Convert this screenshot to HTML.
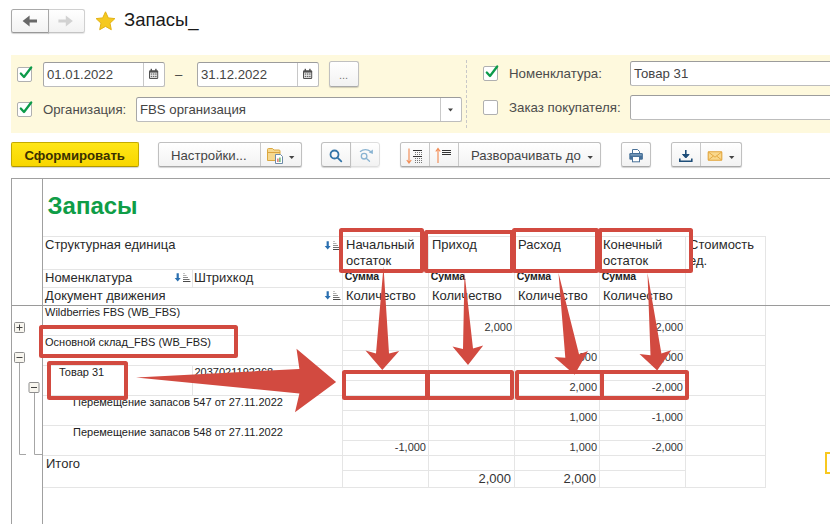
<!DOCTYPE html>
<html lang="ru">
<head>
<meta charset="utf-8">
<title>Запасы_</title>
<style>
html,body{margin:0;padding:0;background:#fff;}
body{width:830px;height:524px;position:relative;overflow:hidden;font-family:"Liberation Sans",Arial,sans-serif;font-size:13.2px;color:#444;}
.a{position:absolute;}
.t{position:absolute;white-space:nowrap;line-height:16px;}
.btn{position:absolute;box-sizing:border-box;border:1px solid #c0c0c0;border-bottom-color:#a9a9a9;border-radius:2.5px;background:linear-gradient(#ffffff,#f2f2f2);box-shadow:0 1px 1px rgba(0,0,0,.18);}
.inp{position:absolute;box-sizing:border-box;border:1px solid #bdbdbd;border-top-color:#9c9c9c;border-left-color:#a8a8a8;border-radius:2.5px;background:#fff;}
.cb{position:absolute;box-sizing:border-box;width:15px;height:15px;border:1px solid #b0b0b0;border-radius:2px;background:#fff;}
.hl{position:absolute;height:1px;background:#e5e5e5;}
.vl{position:absolute;width:1px;background:#e5e5e5;}
.h13{font-size:13px;color:#2a2a2a;}
.s11{font-size:11px;color:#222;}
.num{position:absolute;white-space:nowrap;text-align:right;font-size:11px;line-height:14px;color:#333;}
.red{position:absolute;box-sizing:border-box;border:4px solid #d24a40;border-radius:2.5px;}
</style>
</head>
<body>

<!-- nav buttons -->
<div class="btn" style="left:48px;top:9px;width:37px;height:24px;border-color:#d0d0d0;border-bottom-color:#c4c4c4;border-radius:0 2.5px 2.5px 0;box-shadow:0 1px 1px rgba(0,0,0,.10);"></div>
<div class="btn" style="left:11px;top:9px;width:38px;height:24px;border-color:#a8a8a8;border-bottom-color:#989898;border-radius:2.5px 0 0 2.5px;"></div>
<svg class="a" style="left:0;top:0" width="90" height="40" viewBox="0 0 90 40">
  <path d="M22.6 21 L29.6 15.6 L29.6 19.4 L37 19.4 L37 22.6 L29.6 22.6 L29.6 26.4 Z" fill="#686868"/>
  <path d="M72.8 21 L65.8 15.6 L65.8 19.4 L58.4 19.4 L58.4 22.6 L65.8 22.6 L65.8 26.4 Z" fill="#d2d2d2"/>
</svg>
<!-- star -->
<svg class="a" style="left:0;top:0" width="130" height="40" viewBox="0 0 130 40">
  <path d="M105.5 11.8 L108.3 17.9 L114.9 18.6 L110.0 23.2 L111.3 29.7 L105.5 26.4 L99.7 29.7 L101.0 23.2 L96.1 18.6 L102.7 17.9 Z" fill="#f5c91f" stroke="#e3b214" stroke-width="1" stroke-linejoin="round"/>
</svg>
<div class="t" style="left:124px;top:8px;font-size:18.5px;line-height:24px;color:#1a1a1a;">Запасы_</div>

<!-- yellow panel -->
<div class="a" style="left:11px;top:55px;width:819px;height:78px;background:#fef9dd;"></div>

<div class="cb" style="left:17px;top:67px;"></div>
<div class="inp" style="left:43px;top:62px;width:122px;height:25px;"></div>
<div class="vl" style="left:143px;top:63px;height:23px;background:#c8c8c8;"></div>
<div class="t" style="left:47px;top:66.5px;">01.01.2022</div>
<div class="t" style="left:175px;top:67px;">–</div>
<div class="inp" style="left:197px;top:62px;width:122px;height:25px;"></div>
<div class="vl" style="left:297px;top:63px;height:23px;background:#c8c8c8;"></div>
<div class="t" style="left:201px;top:66.5px;">31.12.2022</div>
<div class="btn" style="left:329px;top:61px;width:30px;height:26px;"></div>
<div class="t" style="left:339px;top:66.5px;color:#777;font-size:11px;">...</div>

<div class="cb" style="left:17px;top:102px;"></div>
<div class="t" style="left:43px;top:102px;color:#4c4c4c;">Организация:</div>
<div class="inp" style="left:136px;top:97px;width:326px;height:25px;"></div>
<div class="vl" style="left:440px;top:98px;height:23px;background:#c8c8c8;"></div>
<div class="t" style="left:140px;top:102px;">FBS организация</div>

<div class="a" style="left:466px;top:60px;width:0;height:68px;border-left:1px dashed #c8c8c8;"></div>

<div class="cb" style="left:483px;top:66px;"></div>
<div class="t" style="left:509px;top:65.5px;color:#4c4c4c;font-size:13.3px;">Номенклатура:</div>
<div class="inp" style="left:630px;top:61px;width:210px;height:25px;"></div>
<div class="t" style="left:634px;top:65.5px;">Товар 31</div>
<div class="cb" style="left:483px;top:100px;"></div>
<div class="t" style="left:509px;top:99.5px;color:#4c4c4c;font-size:13.3px;">Заказ покупателя:</div>
<div class="inp" style="left:630px;top:95px;width:210px;height:25px;"></div>

<!-- toolbar -->
<div class="btn" style="left:11px;top:142px;width:128px;height:25px;background:linear-gradient(#ffe617,#f8d600);border-color:#c4aa00;border-bottom-color:#b09800;border-radius:2px;"></div>
<div class="t" style="left:24.5px;top:147.5px;font-size:13.2px;font-weight:bold;color:#3a3000;">Сформировать</div>

<div class="btn" style="left:158px;top:142px;width:144px;height:25px;"></div>
<div class="vl" style="left:260px;top:143px;height:23px;background:#c8c8c8;"></div>
<div class="t" style="left:171px;top:147.5px;font-size:13.2px;">Настройки...</div>

<div class="btn" style="left:350px;top:142px;width:30px;height:25px;border-color:#dedede;border-radius:0 3px 3px 0;box-shadow:0 1px 1px rgba(0,0,0,.08);"></div>
<div class="btn" style="left:321px;top:142px;width:30px;height:25px;border-radius:3px 0 0 3px;"></div>

<div class="btn" style="left:400px;top:142px;width:201px;height:25px;"></div>
<div class="vl" style="left:429px;top:143px;height:23px;background:#c8c8c8;"></div>
<div class="vl" style="left:458px;top:143px;height:23px;background:#c8c8c8;"></div>
<div class="t" style="left:471px;top:147.5px;font-size:13.2px;">Разворачивать до</div>

<div class="btn" style="left:621px;top:142px;width:30px;height:25px;"></div>
<div class="btn" style="left:671px;top:142px;width:71px;height:25px;"></div>
<div class="vl" style="left:700px;top:143px;height:23px;background:#c8c8c8;"></div>


<!-- icons -->
<svg class="a" style="left:0;top:0" width="830" height="180" viewBox="0 0 830 180">
  <!-- checkmarks -->
  <g fill="none" stroke="#0d9b4a" stroke-width="2.3" stroke-linecap="round" stroke-linejoin="round">
    <path d="M20.8 73.5 L24 77 L31.2 67.5"/>
    <path d="M20.8 108.5 L24 112 L31.2 102.5"/>
    <path d="M486.8 72.5 L490 76 L497.2 66.5"/>
  </g>
  <!-- calendar icons -->
  <g transform="translate(0 0)">
    <rect x="149" y="70.3" width="9.2" height="8.6" rx="1.2" fill="#505050"/>
    <rect x="150.6" y="68.8" width="1.4" height="2.2" fill="#505050"/>
    <rect x="155.2" y="68.8" width="1.4" height="2.2" fill="#505050"/>
    <rect x="150" y="72.6" width="7.2" height="5.3" fill="#f0f0f0"/>
    <g fill="#6a6a6a">
      <rect x="150.7" y="73.4" width="1.5" height="1.3"/><rect x="152.9" y="73.4" width="1.5" height="1.3"/><rect x="155.1" y="73.4" width="1.5" height="1.3"/>
      <rect x="150.7" y="75.8" width="1.5" height="1.3"/><rect x="152.9" y="75.8" width="1.5" height="1.3"/><rect x="155.1" y="75.8" width="1.5" height="1.3"/>
    </g>
  </g>
  <g transform="translate(154 0)">
    <rect x="149" y="70.3" width="9.2" height="8.6" rx="1.2" fill="#505050"/>
    <rect x="150.6" y="68.8" width="1.4" height="2.2" fill="#505050"/>
    <rect x="155.2" y="68.8" width="1.4" height="2.2" fill="#505050"/>
    <rect x="150" y="72.6" width="7.2" height="5.3" fill="#f0f0f0"/>
    <g fill="#6a6a6a">
      <rect x="150.7" y="73.4" width="1.5" height="1.3"/><rect x="152.9" y="73.4" width="1.5" height="1.3"/><rect x="155.1" y="73.4" width="1.5" height="1.3"/>
      <rect x="150.7" y="75.8" width="1.5" height="1.3"/><rect x="152.9" y="75.8" width="1.5" height="1.3"/><rect x="155.1" y="75.8" width="1.5" height="1.3"/>
    </g>
  </g>
  <!-- dropdown arrows -->
  <g fill="#444">
    <path d="M448 108.5 h5 l-2.5 3 z"/>
    <path d="M289 156 h5.4 l-2.7 3 z"/>
    <path d="M587.5 156 h5.4 l-2.7 3 z"/>
    <path d="M729 156 h5.4 l-2.7 3 z"/>
  </g>
  <!-- folder with report -->
  <g>
    <path d="M267.5 151 v-1.5 q0 -1 1 -1 h4 l1.5 1.5 h5 q1 0 1 1 v9.5 h-12.5 z" fill="#f6d88f" stroke="#dba840" stroke-width="1"/>
    <path d="M267.5 152.5 h12.5" stroke="#d9a441" stroke-width="1"/>
    <path d="M275.5 154.5 h5 l2 2 v7 h-7 z" fill="#fff" stroke="#6d8aa8" stroke-width="1"/>
    <rect x="277.3" y="158.5" width="1.2" height="3.5" fill="#d9534f"/>
    <rect x="279.3" y="157.5" width="1.2" height="4.5" fill="#3aa655"/>
  </g>
  <!-- search -->
  <g fill="none" stroke="#3375a8" stroke-width="1.8">
    <circle cx="334.5" cy="154.5" r="4"/>
    <path d="M337.5 157.7 L341.3 161.3" stroke-linecap="round"/>
  </g>
  <g fill="none" stroke="#8ab4d2" stroke-width="1.3">
    <circle cx="364.1" cy="156.2" r="2.8"/>
    <path d="M366.2 158.3 L369.5 161.2" stroke-linecap="round"/>
    <path d="M360 151.8 Q365.3 147.6 371 151.8"/>
    <path d="M372.9 149.6 V153.9 L368.8 152.4 Z" fill="#8ab4d2" stroke="none"/>
  </g>
  <!-- sort icons -->
  <g stroke="#f28c55" stroke-width="1.15" fill="none">
    <path d="M409 148.5 V162.5 M406.8 160 L409 163 L411.2 160"/>
    <path d="M438 163 V149 M435.8 151.5 L438 148.5 L440.2 151.5"/>
  </g>
  <g stroke="#333" stroke-width="1">
    <path d="M413 150.5 H422 M413 156.5 H422" />
    <path d="M442 150.5 H451 M442 152.5 H451 M442 154.5 H451"/>
  </g>
  <g stroke="#777" stroke-width="1" stroke-dasharray="1 1">
    <path d="M415 152.5 H422 M415 154.5 H422 M415 158.5 H422 M415 160.5 H422 M415 162.5 H422"/>
  </g>
  <!-- printer -->
  <g>
    <path d="M632.5 153.5 V149.5 H637.5 L639.5 151.5 V153.5" fill="#fff" stroke="#4a7299" stroke-width="1"/>
    <rect x="629.3" y="153" width="13.6" height="6.8" rx="1.2" fill="#456f98"/>
    <rect x="630.5" y="154.2" width="11.2" height="1.4" fill="#7fa0be"/>
    <rect x="632.5" y="156.5" width="7" height="5.3" fill="#fff" stroke="#4a7299" stroke-width="1"/>
  </g>
  <!-- download -->
  <g fill="none" stroke="#1f4e79" stroke-width="1.6">
    <path d="M685.8 150 V157"/>
    <path d="M682.5 154.5 L685.8 158 L689.1 154.5 Z" fill="#1f4e79" stroke-width="1"/>
    <path d="M679.8 158.5 V161.2 H691.8 V158.5"/>
  </g>
  <!-- mail -->
  <g>
    <rect x="708.2" y="151.8" width="13.6" height="8.4" rx="0.8" fill="#f9d88c" stroke="#e2a53c" stroke-width="1.1"/>
    <path d="M708.4 152 L715 157.2 L721.6 152 M708.4 160 L713.4 156 M721.6 160 L716.6 156" fill="none" stroke="#e2a53c" stroke-width="0.9"/>
  </g>
</svg>

<!-- header sort icons -->
<svg class="a" style="left:0;top:230px" width="830" height="80" viewBox="0 230 830 80">
  <g transform="translate(0 0)">
    <path d="M326.6 241.3 h2.2 v4.8 h1.9 l-3 3.5 l-3 -3.5 h1.9 z" fill="#2a6fb0"/>
    <g stroke-width="1">
      <path d="M333 241.5 H335" stroke="#c4c4c4"/>
      <path d="M333 243.5 H336.5" stroke="#adadad"/>
      <path d="M333 245.5 H338" stroke="#8e8e8e"/>
      <path d="M333 247.5 H339.5" stroke="#6c6c6c"/>
      <path d="M333 249.5 H340.5" stroke="#4a4a4a"/>
    </g>
  </g>
  <g transform="translate(0 50)">
    <path d="M326.6 241.3 h2.2 v4.8 h1.9 l-3 3.5 l-3 -3.5 h1.9 z" fill="#2a6fb0"/>
    <g stroke-width="1">
      <path d="M333 241.5 H335" stroke="#c4c4c4"/>
      <path d="M333 243.5 H336.5" stroke="#adadad"/>
      <path d="M333 245.5 H338" stroke="#8e8e8e"/>
      <path d="M333 247.5 H339.5" stroke="#6c6c6c"/>
      <path d="M333 249.5 H340.5" stroke="#4a4a4a"/>
    </g>
  </g>
  <g transform="translate(-150 32)">
    <path d="M326.6 241.3 h2.2 v4.8 h1.9 l-3 3.5 l-3 -3.5 h1.9 z" fill="#2a6fb0"/>
    <g stroke-width="1">
      <path d="M333 241.5 H335" stroke="#c4c4c4"/>
      <path d="M333 243.5 H336.5" stroke="#adadad"/>
      <path d="M333 245.5 H338" stroke="#8e8e8e"/>
      <path d="M333 247.5 H339.5" stroke="#6c6c6c"/>
      <path d="M333 249.5 H340.5" stroke="#4a4a4a"/>
    </g>
  </g>
</svg>

<!-- report frame -->
<div class="hl" style="left:11px;top:178px;width:819px;background:#a0a0a0;"></div>
<div class="vl" style="left:11px;top:178px;height:346px;background:#a0a0a0;"></div>
<div class="vl" style="left:42px;top:179px;height:345px;background:#a0a0a0;"></div>

<div class="t" style="left:47.5px;top:191px;font-size:24px;line-height:30px;font-weight:bold;color:#0f9d47;">Запасы</div>

<!-- table grid -->
<div id="grid">
<div class="hl" style="left:43px;top:236px;width:723px;"></div>
<div class="hl" style="left:43px;top:269px;width:643px;"></div>
<div class="hl" style="left:43px;top:287px;width:643px;"></div>
<div class="hl" style="left:43px;top:335px;width:723px;"></div>
<div class="hl" style="left:43px;top:365px;width:723px;"></div>
<div class="hl" style="left:43px;top:395px;width:723px;"></div>
<div class="hl" style="left:43px;top:425px;width:723px;"></div>
<div class="hl" style="left:43px;top:455px;width:723px;"></div>
<div class="hl" style="left:43px;top:487px;width:723px;"></div>
<div class="hl" style="left:342px;top:320px;width:344px;"></div>
<div class="hl" style="left:342px;top:350px;width:344px;"></div>
<div class="hl" style="left:342px;top:380px;width:344px;"></div>
<div class="hl" style="left:342px;top:410px;width:344px;"></div>
<div class="hl" style="left:342px;top:440px;width:344px;"></div>
<div class="hl" style="left:342px;top:470px;width:344px;"></div>
<div class="vl" style="left:192px;top:269px;height:18px;"></div>
<div class="vl" style="left:192px;top:365px;height:30px;"></div>
<div class="vl" style="left:342px;top:236px;height:251px;"></div>
<div class="vl" style="left:428px;top:236px;height:251px;"></div>
<div class="vl" style="left:514px;top:236px;height:251px;"></div>
<div class="vl" style="left:599px;top:236px;height:251px;"></div>
<div class="vl" style="left:685px;top:236px;height:251px;"></div>
<div class="vl" style="left:765px;top:236px;height:251px;"></div>
<div class="hl" style="left:12px;top:305px;width:818px;background:#9a9a9a;"></div>
</div>

<!-- header text -->
<div class="t h13" style="left:45px;top:236.5px;">Структурная единица</div>
<div class="t h13" style="left:45px;top:269.5px;">Номенклатура</div>
<div class="t h13" style="left:194px;top:270px;">Штрихкод</div>
<div class="t h13" style="left:45px;top:287.5px;">Документ движения</div>
<div class="t h13" style="left:346px;top:237px;">Начальный<br>остаток</div>
<div class="t h13" style="left:432px;top:237px;">Приход</div>
<div class="t h13" style="left:518px;top:237px;">Расход</div>
<div class="t h13" style="left:603px;top:237px;">Конечный<br>остаток</div>
<div class="t h13" style="left:689px;top:237px;">Стоимость<br>ед.</div>
<div class="t s11" style="left:344.7px;top:267.8px;font-weight:bold;font-size:10.5px;">Сумма</div>
<div class="t s11" style="left:430.7px;top:267.8px;font-weight:bold;font-size:10.5px;">Сумма</div>
<div class="t s11" style="left:516.7px;top:267.8px;font-weight:bold;font-size:10.5px;">Сумма</div>
<div class="t s11" style="left:601.7px;top:267.8px;font-weight:bold;font-size:10.5px;">Сумма</div>
<div class="t h13" style="left:346px;top:288px;">Количество</div>
<div class="t h13" style="left:432px;top:288px;">Количество</div>
<div class="t h13" style="left:518px;top:288px;">Количество</div>
<div class="t h13" style="left:603px;top:288px;">Количество</div>

<!-- rows -->
<div class="t s11" style="left:45px;top:304px;">Wildberries FBS (WB_FBS)</div>
<div class="t s11" style="left:45px;top:334px;">Основной склад_FBS (WB_FBS)</div>
<div class="t s11" style="left:59px;top:364px;">Товар 31</div>
<div class="t s11" style="left:194.5px;top:364px;">2037021192368</div>
<div class="t s11" style="left:73px;top:394px;">Перемещение запасов 547 от 27.11.2022</div>
<div class="t s11" style="left:73px;top:424px;">Перемещение запасов 548 от 27.11.2022</div>
<div class="t h13" style="left:46px;top:456px;">Итого</div>

<div class="num" style="left:430px;width:82px;top:320px;">2,000</div>
<div class="num" style="left:601px;width:82px;top:320px;">2,000</div>
<div class="num" style="left:515px;width:82px;top:350px;">2,000</div>
<div class="num" style="left:601px;width:82px;top:350px;">2,000</div>
<div class="num" style="left:515px;width:82px;top:380px;">2,000</div>
<div class="num" style="left:601px;width:82px;top:380px;">-2,000</div>
<div class="num" style="left:515px;width:82px;top:410px;">1,000</div>
<div class="num" style="left:601px;width:82px;top:410px;">-1,000</div>
<div class="num" style="left:344px;width:82px;top:440px;">-1,000</div>
<div class="num" style="left:515px;width:82px;top:440px;">1,000</div>
<div class="num" style="left:601px;width:82px;top:440px;">-2,000</div>
<div class="num" style="left:429px;width:82px;top:471px;font-size:13px;line-height:16px;">2,000</div>
<div class="num" style="left:514px;width:82px;top:471px;font-size:13px;line-height:16px;">2,000</div>

<!-- tree -->
<svg class="a" style="left:11px;top:305px" width="32" height="160" viewBox="0 0 32 160">
  <g fill="none" stroke="#a6a6a6" stroke-width="1">
    <path d="M8.5 57 V149.5 H15"/>
    <path d="M23.5 87 V149.5 H31"/>
  </g>
  <g fill="#f8f6ef" stroke="#8e8e8e" stroke-width="1">
    <rect x="3.5" y="17.5" width="10" height="10" rx="1"/>
    <rect x="3.5" y="47.5" width="10" height="10" rx="1"/>
    <rect x="18" y="77.5" width="10" height="10" rx="1"/>
  </g>
  <g stroke="#444" stroke-width="1" fill="none">
    <path d="M5.5 22.5 H11.5 M8.5 19.5 V25.5"/>
    <path d="M5.5 52.5 H11.5"/>
    <path d="M20 82.5 H26"/>
  </g>
</svg>

<!-- yellow marker at right edge -->
<div class="a" style="left:825px;top:452px;width:10px;height:18px;border:2px solid #f8c820;background:#fff;"></div>

<!-- annotations -->
<div class="red" style="left:339px;top:228px;width:85.3px;height:45.3px;"></div>
<div class="red" style="left:424.3px;top:229.5px;width:89.5px;height:43.8px;"></div>
<div class="red" style="left:512.2px;top:228px;width:87px;height:45px;"></div>
<div class="red" style="left:598px;top:228.2px;width:94.5px;height:45px;"></div>
<div class="red" style="left:38.6px;top:325px;width:199.2px;height:33.3px;"></div>
<div class="red" style="left:47.2px;top:361.3px;width:80.4px;height:39.1px;"></div>
<div class="red" style="left:341.6px;top:370px;width:87.6px;height:29.8px;"></div>
<div class="red" style="left:426.2px;top:370px;width:87.8px;height:29.8px;"></div>
<div class="red" style="left:515px;top:370px;width:88.7px;height:29.8px;"></div>
<div class="red" style="left:600.3px;top:370px;width:88.5px;height:29.8px;"></div>
<svg class="a" style="left:0;top:0" width="830" height="524" viewBox="0 0 830 524">
  <g fill="#d24a40">
    <path d="M383.5 266.5 L389 353.6 L399.2 351 L382.3 370.1 L365.5 350.6 L376 353.6 Z"/>
    <path d="M464.5 273 L473 348.5 L483.2 345.5 L468 365 L452.5 346.4 L463 348.9 Z"/>
    <path d="M558.5 273 L579.1 354.5 L588 351 L574.6 374.7 L554.3 357 L565.3 357.8 Z"/>
    <path d="M647.5 273 L661.4 353.6 L671.2 350.2 L657.2 370.5 L639.5 354 L650.5 355.3 Z"/>
    <path d="M136 377.6 L299.4 368.9 L296.5 348.7 L336.1 382 L295 412.3 L299.4 393.5 Z"/>
  </g>
</svg>

</body>
</html>
